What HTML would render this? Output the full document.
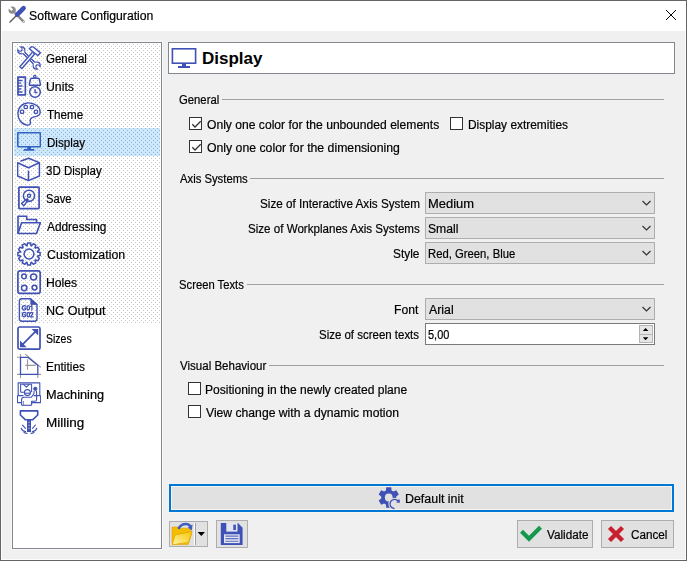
<!DOCTYPE html>
<html><head><meta charset="utf-8">
<style>
*{margin:0;padding:0;box-sizing:border-box}
html,body{width:687px;height:561px;overflow:hidden;background:#f0f0f0}
body{position:relative;font-family:"Liberation Sans",sans-serif;font-size:12px;color:#000}
.a{position:absolute}
.t{position:absolute;line-height:16px;white-space:nowrap;-webkit-text-stroke:0.2px #000}
.r{text-align:right}
.cb{position:absolute;width:13px;height:13px;border:1px solid #333;background:#fff}
.combo{position:absolute;left:425px;width:230px;height:22px;border:1px solid #adadad;background:#e1e1e1}
.sep{position:absolute;height:1px;background:#a0a0a0}
.btn{position:absolute;border:1px solid #adadad;background:#e1e1e1}
</style></head><body>
<!-- window frame -->
<div class="a" style="left:0;top:0;width:687px;height:561px;border:1px solid #646464"></div><div class="a" style="left:1px;top:1px;width:685px;height:559px;border:1px solid #fcfcfc"></div>
<div class="a" style="left:1px;top:1px;width:685px;height:30px;background:#fff"></div>
<!-- title icon -->
<svg class="a" style="left:6px;top:4px" width="22" height="22" viewBox="0 0 22 22">
 <path d="M9.6 9.6 L17.6 17.6" stroke="#8c8c8c" stroke-width="2.6" stroke-linecap="round"/>
 <circle cx="6.2" cy="6.2" r="3.6" fill="#8c8c8c"/>
 <path d="M6.2 6.2 L2.4 2.4" stroke="#fff" stroke-width="2.4"/>
 <circle cx="17.6" cy="17.6" r="0.7" fill="#fff"/>
 <path d="M4 18 L11 11" stroke="#5a5a5a" stroke-width="1.5" stroke-linecap="round"/>
 <path d="M11.2 10.6 L17.6 4.2" stroke="#3f51b5" stroke-width="4.6" stroke-linecap="round"/>
</svg>
<div class="t" style="left:28.98px;top:8px;transform:scaleX(1.0192);transform-origin:0 0">Software Configuration</div>
<!-- close -->
<svg class="a" style="left:665px;top:9px" width="12" height="12" viewBox="0 0 12 12">
 <path d="M1 1 L11 11 M11 1 L1 11" stroke="#000" stroke-width="1"/>
</svg>

<!-- list box -->
<div class="a" style="left:11px;top:41px;width:152px;height:509px;border:1px solid #f8f8f8"></div><div class="a" style="left:12px;top:42px;width:150px;height:507px;border:1px solid #828790;background:#fff"></div>
<div class="a" style="left:14px;top:128px;width:146px;height:28px;background:#cce8ff"></div>
<svg class="a" style="left:14px;top:44px" width="146" height="280">
 <defs><pattern id="dots" x="3" y="0" width="4" height="4" patternUnits="userSpaceOnUse">
  <rect x="0" y="0" width="1" height="1" fill="rgba(0,0,0,0.22)"/>
  <rect x="2" y="2" width="1" height="1" fill="rgba(0,0,0,0.22)"/>
 </pattern></defs>
 <rect x="0" y="0" width="146" height="280" fill="url(#dots)"/>
</svg>
<!--ICONS--><svg class="a" style="left:17px;top:46px" width="24" height="392" viewBox="0 0 24 392" fill="none" stroke="#3f51b5" stroke-width="1.5" stroke-linejoin="round">
 <defs>
  <filter id="ol" x="-30%" y="-30%" width="160%" height="160%">
   <feMorphology in="SourceAlpha" operator="erode" radius="1.35" result="e"/>
   <feComposite in="SourceGraphic" in2="e" operator="out"/>
  </filter>
  <mask id="wrm" maskUnits="userSpaceOnUse" x="-2" y="-2" width="28" height="28">
   <rect x="-2" y="-2" width="28" height="28" fill="#fff"/>
   <path d="M3.6 3.9 L5.2 5.5" stroke="#000" stroke-width="2.6" stroke-linecap="square" transform="translate(-2.6,-2.6)"/>
   <path d="M-1 -1 L4 4" stroke="#000" stroke-width="2.6"/>
   <path d="M20 20 L25 25" stroke="#000" stroke-width="2.6"/>
  </mask>
 </defs>
 <!-- General -->
 <g>
  <g filter="url(#ol)"><g mask="url(#wrm)" fill="#3f51b5" stroke="none">
   <path d="M4 4 L20 20" stroke="#3f51b5" stroke-width="3.4"/>
   <circle cx="4.3" cy="4.3" r="4.1"/>
   <circle cx="19.7" cy="19.7" r="4.1"/>
  </g></g>
  <path d="M3.4 22.2 L17 6.6" stroke="#fff" stroke-width="4.2"/>
  <g filter="url(#ol)"><path d="M3.4 22.2 L17 6.6" stroke="#3f51b5" stroke-width="4.2"/></g>
  <path d="M11.4 2.6 L14.4 0 L16.8 0.6 L24.4 6.8 L21 10.4 L14.4 5.6 Z" fill="#fff" stroke="none"/>
  <g filter="url(#ol)"><path d="M11.4 2.6 L14.4 0 L16.8 0.6 L24.4 6.8 L21 10.4 L14.4 5.6 Z" fill="#3f51b5" stroke="none"/></g>
 </g>
 <!-- Units -->
 <g transform="translate(0,28)">
  <rect x="0.95" y="3.1" width="7.4" height="17.7" stroke-width="1.7"/>
  <path d="M1 6.5 H5.5 M1 9.2 H4.2 M1 12 H5.5 M1 15 H4.2 M1 18 H5.5" stroke-width="1.3"/>
  <circle cx="17.8" cy="2.6" r="1.2" stroke-width="1.2"/>
  <path d="M14.6 4.2 H21.2 Q22 4.2 22.3 5.2 L23.4 10.2 Q23.6 11.2 22.6 11.2 H13.2 Q12.2 11.2 12.4 10.2 L13.5 5.2 Q13.8 4.2 14.6 4.2 Z" stroke-width="1.5"/>
  <circle cx="18" cy="18" r="5.3" stroke-width="1.5"/>
  <path d="M18 15 V18.5 H20.3" stroke-width="1.3"/>
 </g>
 <!-- Theme -->
 <g transform="translate(0,56)">
  <path d="M11.5 0.9 C18 0.9 23.2 4.9 23.2 10.2 C23.2 13.6 20.6 14.3 17.2 14.9 C14.2 15.4 12.6 17 13.3 19.6 C13.9 22 12.6 23.2 10.5 23.1 C4.9 22.8 0.9 17.6 0.9 11.6 C0.9 5.6 5.6 0.9 11.5 0.9 Z" stroke-width="1.4"/>
  <rect x="3.4" y="8.1" width="3.3" height="3.3" rx="1.2" stroke-width="1.3"/>
  <rect x="7.1" y="3.3" width="3.3" height="3.3" rx="1.2" stroke-width="1.3"/>
  <rect x="13.3" y="3.3" width="3.3" height="3.3" rx="1.2" stroke-width="1.3"/>
  <rect x="17.3" y="8.1" width="3.3" height="3.3" rx="1.2" stroke-width="1.3"/>
 </g>
 <!-- Display -->
 <g transform="translate(0,84)" stroke="#3162c2">
  <rect x="0.8" y="2.8" width="22.6" height="13.9" rx="0.6" stroke-width="1.6"/>
  <rect x="10.2" y="16.5" width="3.8" height="2.5" fill="#3162c2" stroke="none"/>
  <path d="M6.2 20.8 L7.2 18.9 H17 L17.6 20.8 Z" fill="#3162c2" stroke="none"/>
 </g>
 <!-- 3D Display -->
 <g transform="translate(0,112)">
  <path d="M3.4 3.2 L11.5 0.3 L22.4 4.6 V18 L11.5 22.6 L0.6 18 V4.8 L11.5 9.8 L22.4 4.6" stroke-width="1.5"/>
  <path d="M11.5 12.6 V22.4" stroke-width="1.5"/>
 </g>
 <!-- Save disk -->
 <g transform="translate(0,140)">
  <rect x="1.9" y="1.1" width="20.2" height="21.5" rx="0.8" stroke-width="1.7"/>
  <circle cx="12" cy="9.8" r="5.6" stroke-width="1.5"/>
  <circle cx="12" cy="9.8" r="1.6" stroke-width="1.4"/>
  <path d="M10.2 12.8 L4.6 17.4 L6.8 19.8 L11.2 14 Z" stroke-width="1.4"/>
 </g>
 <!-- Addressing folder -->
 <g transform="translate(0,168)">
  <path d="M1 19.5 V2.3 H9.7 V5.5 H19.5 V8.7" stroke-width="1.6"/>
  <path d="M1 19.5 L4.6 8.7 H23.4 L19.5 19.5 Z" stroke-width="1.6"/>
 </g>
 <!-- Customization gear -->
 <g transform="translate(0,196)">
  <path d="M10.02 3.53 L10.55 0.89 L13.45 0.89 L13.98 3.53 L14.52 3.67 L16.30 1.66 L18.81 3.11 L17.95 5.66 L18.34 6.05 L20.89 5.19 L22.34 7.70 L20.33 9.48 L20.47 10.02 L23.11 10.55 L23.11 13.45 L20.47 13.98 L20.33 14.52 L22.34 16.30 L20.89 18.81 L18.34 17.95 L17.95 18.34 L18.81 20.89 L16.30 22.34 L14.52 20.33 L13.98 20.47 L13.45 23.11 L10.55 23.11 L10.02 20.47 L9.48 20.33 L7.70 22.34 L5.19 20.89 L6.05 18.34 L5.66 17.95 L3.11 18.81 L1.66 16.30 L3.67 14.52 L3.53 13.98 L0.89 13.45 L0.89 10.55 L3.53 10.02 L3.67 9.48 L1.66 7.70 L3.11 5.19 L5.66 6.05 L6.05 5.66 L5.19 3.11 L7.70 1.66 L9.48 3.67 Z" stroke-width="1.5"/>
  <circle cx="12" cy="12" r="4.9" stroke-width="1.5"/>
 </g>
 <!-- Holes -->
 <g transform="translate(0,224)">
  <rect x="0.9" y="0.9" width="22.3" height="22.5" rx="2.2" stroke-width="1.7"/>
  <circle cx="7" cy="6.4" r="2.3" stroke-width="1.5"/>
  <circle cx="16.6" cy="7.1" r="3" stroke-width="1.5"/>
  <circle cx="7.2" cy="18" r="2.7" stroke-width="1.5"/>
  <circle cx="17.5" cy="17.6" r="2.4" stroke-width="1.5"/>
 </g>
 <!-- NC Output -->
 <g transform="translate(0,252)">
  <path d="M4.8 0.8 H13.5 L20 6.6 V20.8 Q20 23.2 17.6 23.2 H4.8 Q2.4 23.2 2.4 20.8 V3.2 Q2.4 0.8 4.8 0.8 Z" stroke-width="1.4"/>
  <path d="M13.8 1 L19.8 6.4 H13.8 Z" fill="#3f51b5" stroke-width="0.8"/>
  <g stroke-width="1.25" stroke-linecap="round">
   <path d="M8.9 8.2 Q8.3 7.6 7.3 7.6 Q5.3 7.6 5.3 9.8 Q5.3 12 7.3 12 Q8.9 12 8.9 10.8 V10 H7.4"/>
   <ellipse cx="11.3" cy="9.8" rx="1.25" ry="2.15"/>
   <path d="M13.7 8.4 L14.9 7.6 V12"/>
   <path d="M8.9 15 Q8.3 14.4 7.3 14.4 Q5.3 14.4 5.3 16.6 Q5.3 18.8 7.3 18.8 Q8.9 18.8 8.9 17.6 V16.8 H7.4"/>
   <ellipse cx="11.3" cy="16.6" rx="1.25" ry="2.15"/>
   <path d="M13.4 15.3 Q13.6 14.4 14.6 14.4 Q15.8 14.4 15.8 15.5 Q15.8 16.3 14.9 17.1 L13.4 18.8 H16.1"/>
  </g>
 </g>
 <!-- Sizes -->
 <g transform="translate(0,280)">
  <rect x="1" y="1" width="22" height="22.2" rx="1.8" stroke-width="1.7"/>
  <path d="M5.2 18.8 L18.8 5.2" stroke-width="1.7"/>
  <path d="M14.6 3 H21.2 V9.6 Z M3 14.6 V21.2 H9.6 Z" fill="#3f51b5" stroke="none"/>
 </g>
 <!-- Entities -->
 <g transform="translate(0,308)">
  <path d="M0 3.3 H3 M3.5 0 V3 M0 20.4 H3 M3.5 20.6 V24 M21 20.4 H24 M20.8 20.6 V24 M10.5 5.2 V15.8 M8.2 11.4 H18.8 M8.2 0.2 L23.8 13.4" stroke="#999" stroke-width="1.1"/>
  <path d="M3.5 3.3 H10.8 L20.8 11.3 V20.4 H3.5 Z" stroke-width="1.3" stroke-linejoin="miter"/>
 </g>
 <!-- Machining -->
 <g transform="translate(0,336)">
  <path d="M1.2 13.4 V0.9 H22.8 V13.4" stroke-width="1.1"/>
  <path d="M0.4 13.6 H6.5 M16.5 13.6 H23.6 M0.4 13.6 V20.6 H4.5 M23.6 13.6 V20.6 H15" stroke-width="1.1"/>
  <path d="M3.6 10.2 V2.2 H14.6 V10.2 M3.6 10.2 H7" stroke-width="1.05"/>
  <path d="M6.4 2.4 L9.4 5.2 L12.4 2.4" stroke-width="1.05"/>
  <circle cx="10.4" cy="10.6" r="3" stroke-width="1.1"/>
  <path d="M7.6 11.2 H13.2" stroke-width="1.1"/>
  <path d="M4.6 23.3 V17.6 Q4.6 15.4 7.2 15.2 H14.3 L17 11.5 V9" stroke-width="1.1"/>
  <path d="M14.6 23.3 V19.2 H18 Q19.6 19.2 19.6 17.4 V10.2 Q19.6 8.8 18.6 8.6" stroke-width="1.1"/>
  <path d="M4.6 23.3 H14.6" stroke-width="1.1"/>
  <path d="M6.5 19 V23" stroke="#7f8dcf" stroke-width="1.1"/>
  <circle cx="18.3" cy="6.8" r="1.7" fill="#3f51b5" stroke-width="0.8"/>
 </g>
 <!-- Milling -->
 <g transform="translate(0,364)">
  <path d="M3.4 0.9 H20.7 V5 L15.6 9.8 H8.5 L3.4 5 Z" stroke-width="1.6"/>
  <rect x="10" y="9.5" width="4" height="12.5" fill="#3f51b5" stroke="none"/>
  <path d="M12 11.8 V12.8 M12 14.8 V15.8 M12 17.8 V18.8" stroke="#fff" stroke-width="1"/>
  <path d="M5.6 15.2 L8.4 18.4 M4.2 18.2 Q5 21.2 8.6 21.6 M7 22.6 Q8.6 23.6 10 23.2 M18.4 15 L15.6 18.4 M19.8 18.2 Q19 21.2 15.4 21.6 M17 22.6 Q15.4 23.6 14 23.2" stroke-width="1.15" stroke-linecap="round"/>
 </g>
</svg><!--/ICONS-->
<div class="t" style="left:46.34px;top:51px;transform:scaleX(0.9585);transform-origin:0 0">General</div>
<div class="t" style="left:46.28px;top:79px;transform:scaleX(1.0231);transform-origin:0 0">Units</div>
<div class="t" style="left:47.10px;top:107px;transform:scaleX(0.9703);transform-origin:0 0">Theme</div>
<div class="t" style="left:46.93px;top:135px;transform:scaleX(0.9658);transform-origin:0 0">Display</div>
<div class="t" style="left:45.94px;top:163px;transform:scaleX(0.9596);transform-origin:0 0">3D Display</div>
<div class="t" style="left:46.07px;top:191px;transform:scaleX(0.9308);transform-origin:0 0">Save</div>
<div class="t" style="left:47.30px;top:219px;transform:scaleX(0.9881);transform-origin:0 0">Addressing</div>
<div class="t" style="left:46.67px;top:247px;transform:scaleX(1.0270);transform-origin:0 0">Customization</div>
<div class="t" style="left:46.28px;top:275px;transform:scaleX(1.0172);transform-origin:0 0">Holes</div>
<div class="t" style="left:46.25px;top:303px;transform:scaleX(1.0473);transform-origin:0 0">NC Output</div>
<div class="t" style="left:46.42px;top:331px;transform:scaleX(0.8750);transform-origin:0 0">Sizes</div>
<div class="t" style="left:46.31px;top:359px;transform:scaleX(0.9895);transform-origin:0 0">Entities</div>
<div class="t" style="left:46.24px;top:387px;transform:scaleX(1.0623);transform-origin:0 0">Machining</div>
<div class="t" style="left:46.17px;top:415px;transform:scaleX(1.1250);transform-origin:0 0">Milling</div>


<!-- right header -->
<div class="a" style="left:168px;top:42px;width:507px;height:32px;border:1px solid #828790;background:#fff"></div>
<svg class="a" style="left:171px;top:47px" width="26" height="22" viewBox="0 0 26 22">
 <rect x="1.4" y="1.8" width="23.2" height="14.4" fill="none" stroke="#3f51b5" stroke-width="1.6"/>
 <rect x="11" y="16" width="4" height="3" fill="#3f51b5"/>
 <rect x="7" y="19" width="12" height="2" fill="#3f51b5"/>
</svg>
<div class="a" style="left:202px;top:49px;font-size:17px;font-weight:bold;line-height:20px">Display</div>

<!-- General -->
<div class="t" style="left:179.46px;top:92px;transform:scaleX(0.9415);transform-origin:0 0">General</div>
<div class="sep" style="left:222px;top:99px;width:442px"></div>
<div class="cb" style="left:189px;top:117px"><svg class="a" style="left:1px;top:1px" width="11" height="11" viewBox="0 0 11 11"><path d="M1.3 5.3 L4 8 L9.7 2.3" fill="none" stroke="#333" stroke-width="1.3"/></svg></div>
<div class="t" style="left:206.69px;top:117px;transform:scaleX(1.0092);transform-origin:0 0">Only one color for the unbounded elements</div>
<div class="cb" style="left:450px;top:117px"></div>
<div class="t" style="left:467.61px;top:117px;transform:scaleX(0.9929);transform-origin:0 0">Display extremities</div>
<div class="cb" style="left:189px;top:140px"><svg class="a" style="left:1px;top:1px" width="11" height="11" viewBox="0 0 11 11"><path d="M1.3 5.3 L4 8 L9.7 2.3" fill="none" stroke="#333" stroke-width="1.3"/></svg></div>
<div class="t" style="left:206.68px;top:140px;transform:scaleX(1.0214);transform-origin:0 0">Only one color for the dimensioning</div>

<!-- Axis -->
<div class="t" style="left:180.10px;top:171px;transform:scaleX(0.9403);transform-origin:0 0">Axis Systems</div>
<div class="sep" style="left:250px;top:178px;width:414px"></div>
<div class="t" style="left:259.83px;top:196px;transform:scaleX(0.9747);transform-origin:0 0">Size of Interactive Axis System</div>
<div class="combo" style="top:192px"><svg class="a" style="left:215px;top:7px" width="11" height="7" viewBox="0 0 11 7"><path d="M1.5 1 L5.5 5 L9.5 1" fill="none" stroke="#333" stroke-width="1.2"/></svg></div>
<div class="t" style="left:428.32px;top:196px;transform:scaleX(1.0780);transform-origin:0 0">Medium</div>
<div class="t" style="left:247.73px;top:221px;transform:scaleX(0.9659);transform-origin:0 0">Size of Workplanes Axis Systems</div>
<div class="combo" style="top:217px"><svg class="a" style="left:215px;top:7px" width="11" height="7" viewBox="0 0 11 7"><path d="M1.5 1 L5.5 5 L9.5 1" fill="none" stroke="#333" stroke-width="1.2"/></svg></div>
<div class="t" style="left:428.39px;top:221px;transform:scaleX(1.0143);transform-origin:0 0">Small</div>
<div class="t" style="left:393.01px;top:246px;transform:scaleX(0.9880);transform-origin:0 0">Style</div>
<div class="combo" style="top:242px"><svg class="a" style="left:215px;top:7px" width="11" height="7" viewBox="0 0 11 7"><path d="M1.5 1 L5.5 5 L9.5 1" fill="none" stroke="#333" stroke-width="1.2"/></svg></div>
<div class="t" style="left:428.46px;top:246px;transform:scaleX(0.9407);transform-origin:0 0">Red, Green, Blue</div>

<!-- Screen texts -->
<div class="t" style="left:179.26px;top:277px;transform:scaleX(0.9382);transform-origin:0 0">Screen Texts</div>
<div class="sep" style="left:247px;top:284px;width:417px"></div>
<div class="t" style="left:394.49px;top:302px;transform:scaleX(1.0130);transform-origin:0 0">Font</div>
<div class="combo" style="top:298px"><svg class="a" style="left:215px;top:7px" width="11" height="7" viewBox="0 0 11 7"><path d="M1.5 1 L5.5 5 L9.5 1" fill="none" stroke="#333" stroke-width="1.2"/></svg></div>
<div class="t" style="left:429.20px;top:302px;transform:scaleX(1.0261);transform-origin:0 0">Arial</div>
<div class="t" style="left:319.44px;top:327px;transform:scaleX(0.9553);transform-origin:0 0">Size of screen texts</div>
<div class="a" style="left:425px;top:323px;width:230px;height:22px;border:1px solid #7a7a7a;background:#fff"></div>
<div class="t" style="left:427.79px;top:327px;transform:scaleX(0.9136);transform-origin:0 0">5,00</div>
<div class="a" style="left:639px;top:325px;width:14px;height:10px;border:1px solid #b4b4b4;background:#e6e6e6"></div>
<div class="a" style="left:639px;top:334px;width:14px;height:9px;border:1px solid #b4b4b4;background:#e6e6e6"></div>
<svg class="a" style="left:639px;top:325px" width="14" height="18" viewBox="0 0 14 18"><path d="M3.8 6 L9.4 6 L6.6 3 Z M3.8 12.2 L9.4 12.2 L6.6 15.2 Z" fill="#000"/></svg>

<!-- Visual -->
<div class="t" style="left:180.20px;top:358px;transform:scaleX(0.9611);transform-origin:0 0">Visual Behaviour</div>
<div class="sep" style="left:269px;top:365px;width:395px"></div>
<div class="cb" style="left:188px;top:382px"></div>
<div class="t" style="left:205.20px;top:382px;transform:scaleX(1.0035);transform-origin:0 0">Positioning in the newly created plane</div>
<div class="cb" style="left:188px;top:405px"></div>
<div class="t" style="left:206.20px;top:405px;transform:scaleX(1.0132);transform-origin:0 0">View change with a dynamic motion</div>

<!-- Bottom buttons -->
<div class="a" style="left:168px;top:483px;width:507px;height:30px;border:1px solid #f7f3ee"></div><div class="a" style="left:169px;top:484px;width:505px;height:28px;border:2px solid #0078d7;background:#e1e1e1;box-shadow:inset 0 0 0 1px #f8f2ea"></div>
<div class="t" style="left:404.77px;top:491px;transform:scaleX(1.0345);transform-origin:0 0">Default init</div>
<svg class="a" style="left:374px;top:484px" width="30" height="28" viewBox="0 0 30 28">
 <defs><mask id="gm" maskUnits="userSpaceOnUse" x="0" y="0" width="30" height="28">
  <rect width="30" height="28" fill="#fff"/>
  <circle cx="14.75" cy="13.5" r="3.9" fill="#000"/>
  <circle cx="20.6" cy="20" r="6.2" fill="#000"/>
 </mask></defs>
 <g mask="url(#gm)"><path d="M-2.82 -7.06 L-2.50 -10.20 L2.50 -10.20 L2.82 -7.06 L4.70 -5.97 L7.58 -7.26 L10.08 -2.94 L7.52 -1.09 L7.52 1.09 L10.08 2.94 L7.58 7.26 L4.70 5.97 L2.82 7.06 L2.50 10.20 L-2.50 10.20 L-2.82 7.06 L-4.70 5.97 L-7.58 7.26 L-10.08 2.94 L-7.52 1.09 L-7.52 -1.09 L-10.08 -2.94 L-7.58 -7.26 L-4.70 -5.97 Z" transform="translate(14.75,13.5)" fill="#3f51b5"/></g>
 <path d="M24.2 17.2 A4.6 4.6 0 1 0 20.6 24.6" fill="none" stroke="#3f51b5" stroke-width="1.4" transform="rotate(0)"/>
 <path d="M22.2 18.6 L26 18.8 L25.4 14.8 Z" fill="#3f51b5"/>
</svg>
<div class="btn" style="left:169px;top:521px;width:39px;height:26px"></div>
<div class="a" style="left:194px;top:523px;width:1px;height:22px;background:#fff"></div>
<div class="a" style="left:195px;top:523px;width:1px;height:22px;background:#a0a0a0"></div>
<svg class="a" style="left:168px;top:519px" width="42" height="30" viewBox="0 0 42 30">
 <defs>
  <linearGradient id="fg" x1="0" y1="1" x2="1" y2="0"><stop offset="0" stop-color="#fff3a8"/><stop offset="1" stop-color="#f6c700"/></linearGradient>
 </defs>
 <path d="M4 25.6 V8 H9.6 L10.6 9.2 H22.5 V14 H23.8 L20.2 25.6 Z" fill="#f4be00" stroke="#e0a000" stroke-width="0.6"/>
 <path d="M4.3 25.8 L7 16 L24 12.4 L20.4 23.4 Z" fill="url(#fg)" stroke="#e3a800" stroke-width="0.8"/>
 <path d="M10.4 9.8 Q13.5 4 19.6 5.2 Q21.8 5.8 22.6 7.6" fill="none" stroke="#3f5fbf" stroke-width="2.6"/>
 <path d="M19.8 8.4 L24.6 5.6 L23.8 11.4 Z" fill="#3f5fbf"/>
 <path d="M29.6 13 L37 13 L33.3 17 Z" fill="#000"/>
</svg>
<div class="btn" style="left:216px;top:520px;width:32px;height:28px"></div>
<svg class="a" style="left:214px;top:518px" width="36" height="32" viewBox="0 0 36 32">
 <path d="M6.8 5 H24 L28.6 9.8 V26.9 H6.8 Z" fill="#3f51b5"/>
 <rect x="12.3" y="5" width="11.2" height="8.6" fill="#e4e6ef"/>
 <rect x="19.3" y="6.6" width="2.6" height="5.4" fill="#3f51b5"/>
 <rect x="10" y="16.3" width="15.7" height="8.8" fill="#e4e6ef"/>
 <path d="M11.4 18.1 H24.4 M11.4 20.6 H24.4 M11.4 23.2 H24.4" stroke="#5c6cc0" stroke-width="1.1"/>
</svg>
<div class="btn" style="left:517px;top:520px;width:76px;height:28px"></div>
<div class="t" style="left:547.00px;top:527px;transform:scaleX(0.9762);transform-origin:0 0">Validate</div>
<svg class="a" style="left:516px;top:520px" width="30" height="28" viewBox="0 0 30 28"><path d="M5.5 11.2 L13 18.8 L24.5 7.2" fill="none" stroke="#12994a" stroke-width="4.2" stroke-linejoin="miter"/></svg>
<div class="btn" style="left:601px;top:520px;width:73px;height:28px"></div>
<div class="t" style="left:631.32px;top:527px;transform:scaleX(0.9750);transform-origin:0 0">Cancel</div>
<svg class="a" style="left:600px;top:520px" width="30" height="28" viewBox="0 0 30 28"><path d="M9.5 7.5 L22.5 20.5 M22.5 7.5 L9.5 20.5" fill="none" stroke="#c9202f" stroke-width="4.3"/></svg>
</body></html>
